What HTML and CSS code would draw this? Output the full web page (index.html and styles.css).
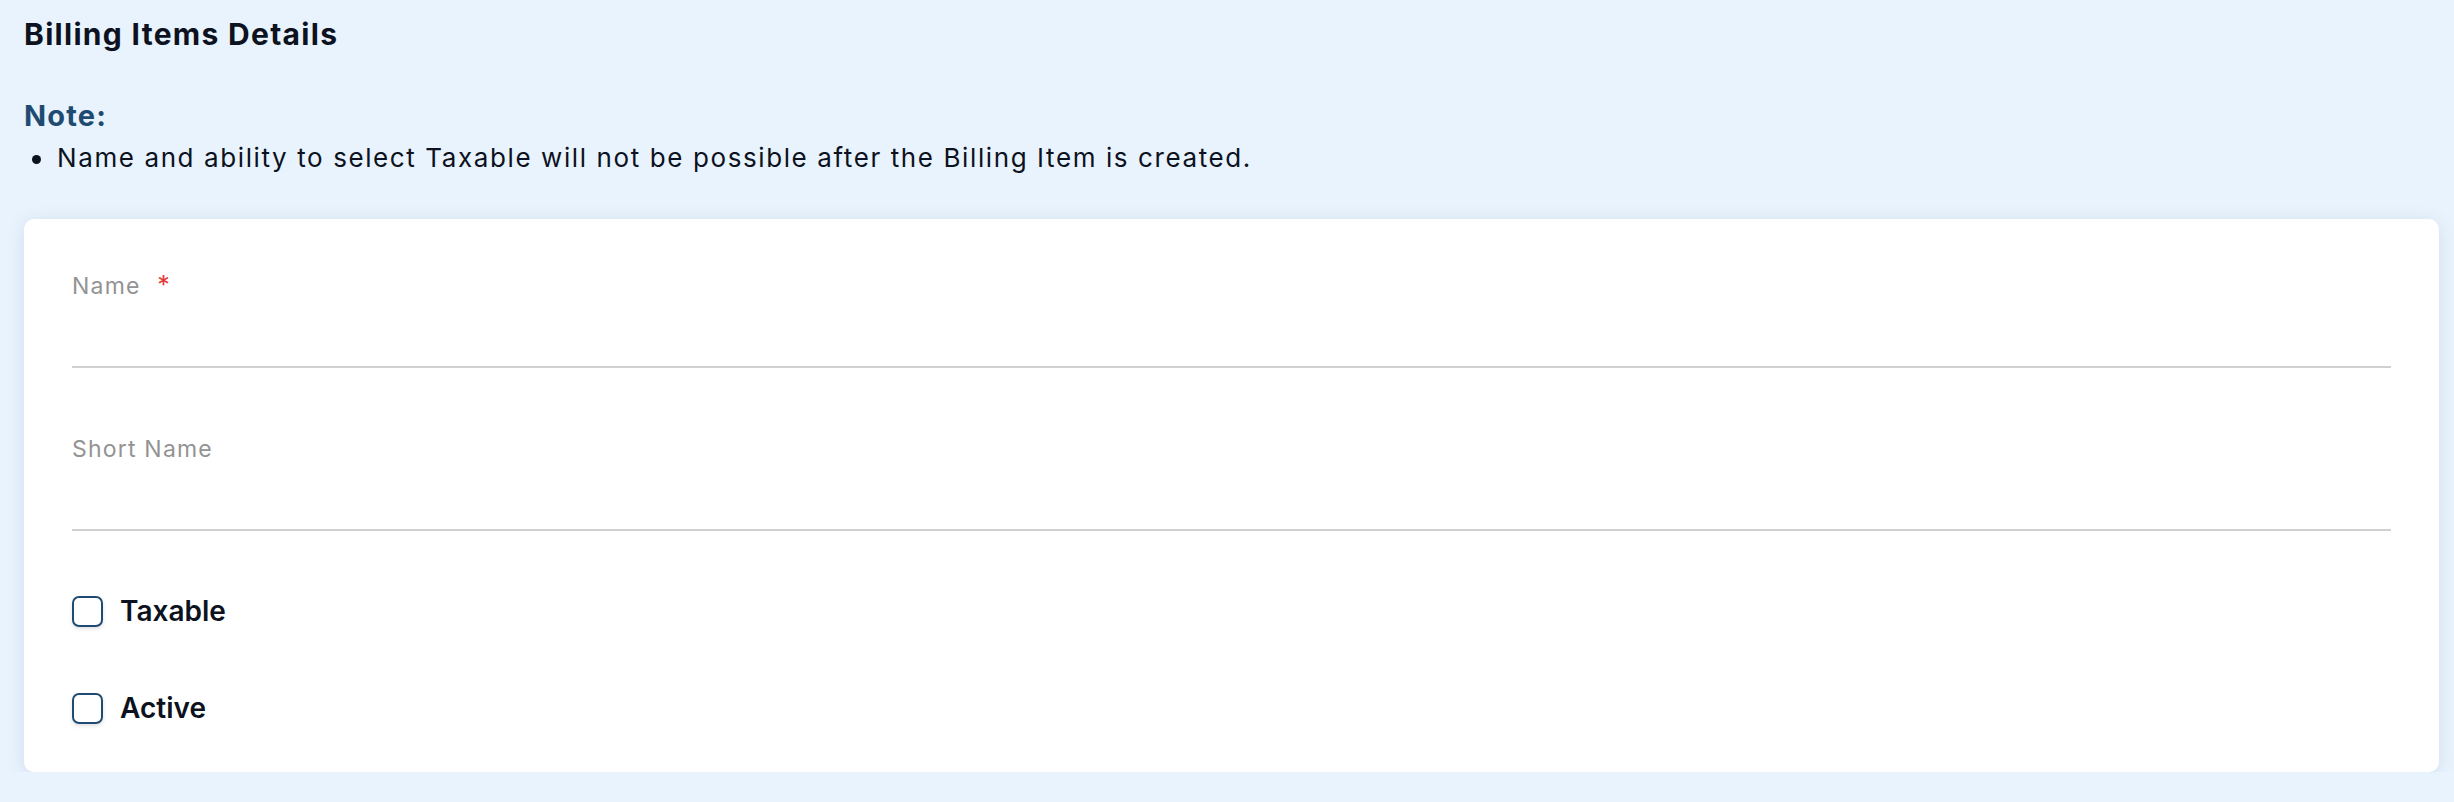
FILE: index.html
```html
<!DOCTYPE html>
<html lang="en">
<head>
    <meta charset="UTF-8">
    <meta name="viewport" content="width=device-width, initial-scale=1.0">
    <title>Billing Items Details</title>
    <link rel="stylesheet" href="styles.css">
</head>
<body>
    <main class="page">
        <h1 class="page-title">Billing Items Details</h1>

        <section class="note">
            <h2 class="note-title">Note:</h2>
            <ul class="note-list">
                <li>Name and ability to select Taxable will not be possible after the Billing Item is created.</li>
            </ul>
        </section>

        <form class="card">
            <div class="field">
                <label class="field-label" for="name">Name <span class="required">*</span></label>
                <input class="field-input" type="text" id="name">
            </div>
            <div class="field">
                <label class="field-label" for="short-name">Short Name</label>
                <input class="field-input" type="text" id="short-name">
            </div>

            <div class="checks">
                <label class="check">
                    <input type="checkbox">
                    <span class="check-box"></span>
                    <span class="check-text">Taxable</span>
                </label>
                <label class="check">
                    <input type="checkbox">
                    <span class="check-box"></span>
                    <span class="check-text">Active</span>
                </label>
            </div>
        </form>
    </main>
</body>
</html>
```

FILE: styles.css
```css
body {
    margin: 0;
    padding: 0;
    background-color: #e9f3fd;
    font-family: Inter, "Liberation Sans", sans-serif;
    color: #0c1220;
}

.page {
    padding: 14px 15px 0 24px;
}

.page-title {
    margin: 0;
    font-size: 30px;
    font-weight: 700;
    line-height: 40px;
    letter-spacing: 1.3px;
}

.note {
    margin-top: 42px;
}

.note-title {
    margin: 0;
    font-size: 29px;
    font-weight: 700;
    line-height: 40px;
    letter-spacing: 1.2px;
    color: #1f4b72;
}

.note-list {
    list-style: none;
    margin: 4px 0 0;
    padding: 0;
}

.note-list li {
    position: relative;
    padding-left: 33px;
    font-size: 26px;
    line-height: 36px;
    letter-spacing: 1.6px;
}

/* custom bullet so it sits where the design has it */
.note-list li::before {
    content: "";
    position: absolute;
    left: 8px;
    top: 15px;
    width: 9px;
    height: 9px;
    border-radius: 50%;
    background-color: #0c1220;
}

.card {
    margin-top: 43px;
    background-color: #fff;
    border-radius: 10px;
    box-shadow: 0 3px 18px rgba(60, 100, 150, 0.14);
    padding: 50px 48px 48px;
}

.field {
    display: flex;
    flex-direction: column;
}

.field + .field {
    margin-top: 65px;
}

.field-label {
    font-size: 23px;
    line-height: 33px;
    color: #939393;
    letter-spacing: 1.2px;
}

.required {
    color: #e53935;
    margin-left: 9px;
    font-size: 25px;
}

.field-input {
    border: none;
    border-bottom: 2px solid #d0d0d0;
    height: 65px;
    box-sizing: border-box;
    font: inherit;
    font-size: 24px;
    outline: none;
    background: transparent;
    padding: 0;
}

.checks {
    margin-top: 65px;
    display: flex;
    flex-direction: column;
    gap: 66px;
}

.check {
    display: flex;
    align-items: center;
    gap: 17px;
    cursor: pointer;
}

.check input {
    display: none;
}

.check-box {
    width: 31px;
    height: 31px;
    box-sizing: border-box;
    border: 2px solid #1f4b72;
    border-radius: 7px;
    box-shadow: 0 2px 4px rgba(0, 0, 0, 0.12);
}

.check-text {
    font-size: 28px;
    font-weight: 600;
    line-height: 31px;
}
```
